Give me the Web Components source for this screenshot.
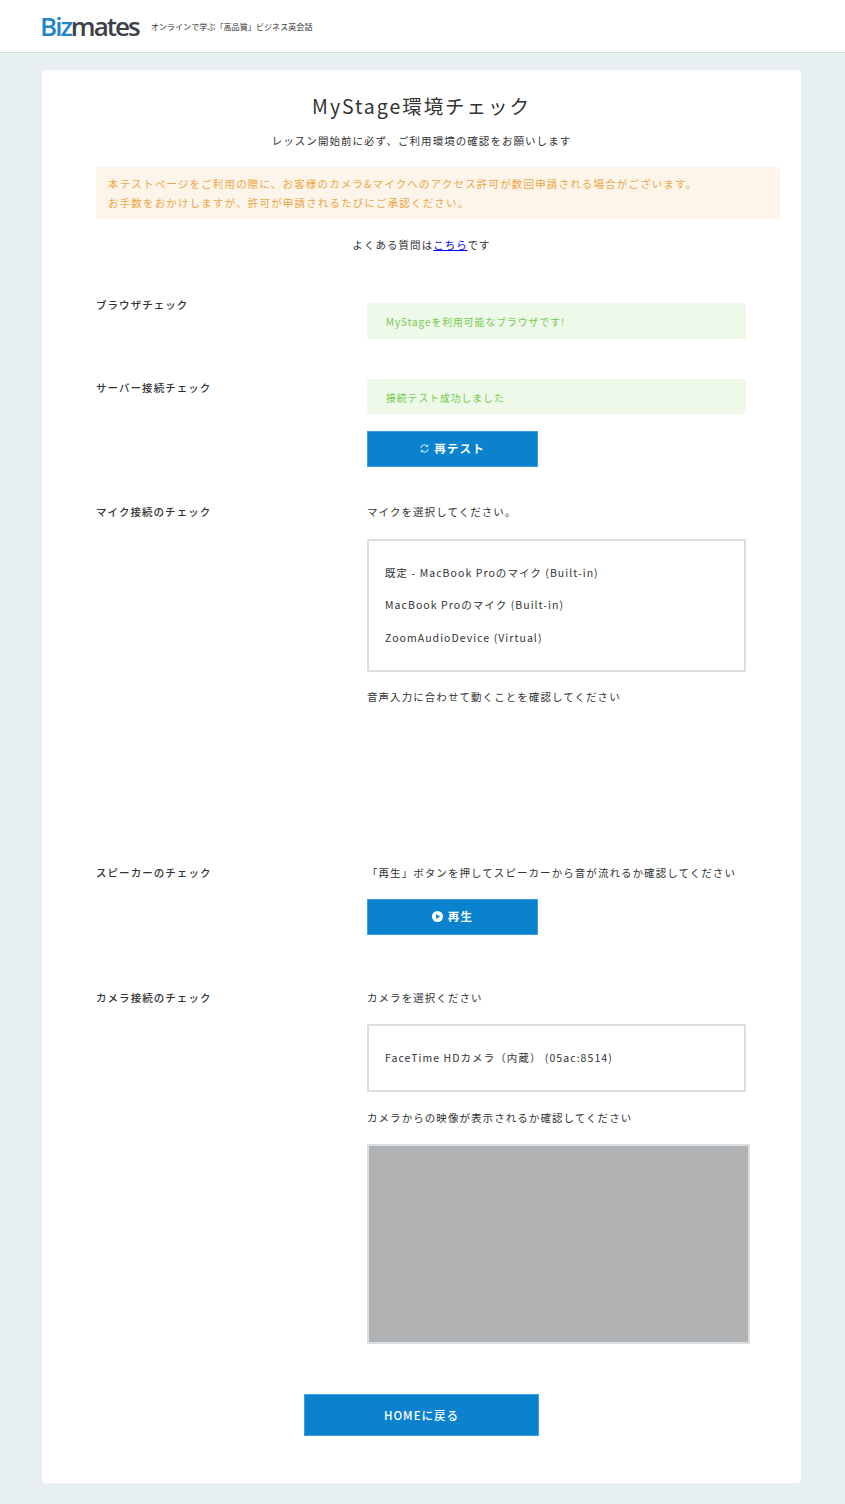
<!DOCTYPE html>
<html lang="ja">
<head>
<meta charset="utf-8">
<title>MyStage環境チェック</title>
<style>
  html, body { margin: 0; padding: 0; background: #e8eff1; }
  body {
    font-family: "Noto Sans CJK JP", "Noto Sans", sans-serif;
    color: #333;
    font-size: 10.5px;
  }
  .line { display: block; height: 16px; line-height: 16px; letter-spacing: 1.06px; white-space: nowrap; }
</style>
</head>
<body>

<site-header tagline="オンラインで学ぶ「高品質」ビジネス英会話"></site-header>

<check-card>
  <page-intro heading="MyStage環境チェック" lead="レッスン開始前に必ず、ご利用環境の確認をお願いします">
    本テストページをご利用の際に、お客様のカメラ&amp;マイクへのアクセス許可が数回申請される場合がございます。<br>
    お手数をおかけしますが、許可が申請されるたびにご承認ください。
    <span slot="faq">よくある質問は<a href="#faq">こちら</a>です</span>
  </page-intro>

  <check-row label="ブラウザチェック" style="--row-gap:44px;--body-top:6px">
    <status-box>MyStageを利用可能なブラウザです!</status-box>
  </check-row>

  <check-row label="サーバー接続チェック" style="--row-gap:40px;--label-top:1px">
    <status-box>接続テスト成功しました</status-box>
    <action-button icon="sync" style="--top:16.5px">再テスト</action-button>
  </check-row>

  <check-row label="マイク接続のチェック" style="--row-gap:37px">
    <span class="line">マイクを選択してください。</span>
    <device-list style="--top:19px;--pad:24px">
      <span>既定 - MacBook Proのマイク (Built-in)</span>
      <span>MacBook Proのマイク (Built-in)</span>
      <span>ZoomAudioDevice (Virtual)</span>
    </device-list>
    <span class="line" style="margin-top:17px">音声入力に合わせて動くことを確認してください</span>
  </check-row>

  <check-row label="スピーカーのチェック" style="--row-gap:160px">
    <span class="line">「再生」ボタンを押してスピーカーから音が流れるか確認してください</span>
    <action-button icon="play" style="--top:18px">再生</action-button>
  </check-row>

  <check-row label="カメラ接続のチェック" style="--row-gap:55px">
    <span class="line">カメラを選択ください</span>
    <device-list style="--top:18px;--pad:24px">
      <span>FaceTime HDカメラ（内蔵） (05ac:8514)</span>
    </device-list>
    <span class="line" style="margin-top:18px">カメラからの映像が表示されるか確認してください</span>
    <video-preview></video-preview>
  </check-row>

  <home-button>HOMEに戻る</home-button>
</check-card>

<script>
class SiteHeader extends HTMLElement {
  constructor() {
    super();
    this.attachShadow({mode: 'open'});
  }

  connectedCallback() {
    this.shadowRoot.innerHTML = `
      <style>
        :host {
          display: flex;
          align-items: center;
          height: 52px;
          padding-left: 40px;
          background: #fff;
          border-bottom: 1px solid #d3d9db;
        }
        .logo {
          font-family: "Open Sans", sans-serif;
          font-weight: 600;
          font-size: 26px;
          letter-spacing: -2px;
          line-height: 30px;
          color: #3c4146;
        }
        .logo b { font-weight: 600; color: #2186c9; }
        .tagline {
          margin-left: 12px;
          font-size: 8.1px;
          color: #333;
          white-space: nowrap;
        }
      </style>
      <span class="logo"><b>Biz</b>mates</span>
      <span class="tagline">${this.getAttribute('tagline')}</span>
    `;
  }
}

class CheckCard extends HTMLElement {
  constructor() {
    super();
    this.attachShadow({mode: 'open'}).innerHTML = `
      <style>
        :host {
          display: block;
          box-sizing: border-box;
          width: 759px;
          margin: 17px 0 21px 42px;
          padding: 21px 21px 47px 54px;
          background: #fff;
          border-radius: 3px;
        }
      </style>
      <slot></slot>
    `;
  }
}

class PageIntro extends HTMLElement {
  constructor() {
    super();
    this.attachShadow({mode: 'open'});
  }

  connectedCallback() {
    this.shadowRoot.innerHTML = `
      <style>
        :host { display: block; }
        h1 {
          margin: 0 0 0 -54px;
          width: 759px;
          font-size: 19.5px;
          font-weight: 400;
          line-height: 30px;
          letter-spacing: 1.95px;
          text-align: center;
          color: #333;
        }
        .lead, .faq {
          margin-left: -54px;
          width: 759px;
          height: 16px;
          line-height: 16px;
          font-size: 10.5px;
          text-align: center;
          letter-spacing: 1.05px;
        }
        .lead { margin-top: 12px; }
        .faq { margin-top: 18px; }
        .notice {
          margin-top: 18px;
          padding: 7px 12px;
          background: #fdf4ea;
          border-radius: 3px;
          color: #e9a745;
          font-size: 10.5px;
          line-height: 19px;
          letter-spacing: 1.17px;
          white-space: nowrap;
        }
        ::slotted(span) { color: #333; }
      </style>
      <h1>${this.getAttribute('heading')}</h1>
      <div class="lead">${this.getAttribute('lead')}</div>
      <div class="notice"><slot></slot></div>
      <div class="faq"><slot name="faq"></slot></div>
    `;
  }
}

class CheckRow extends HTMLElement {
  constructor() {
    super();
    this.attachShadow({mode: 'open'});
  }

  connectedCallback() {
    this.shadowRoot.innerHTML = `
      <style>
        :host {
          display: grid;
          grid-template-columns: 271px 379px;
          margin-top: var(--row-gap, 40px);
        }
        .label {
          margin-top: var(--label-top, 0);
          font-size: 10.5px;
          font-weight: 500;
          line-height: 16px;
          letter-spacing: 1.05px;
          white-space: nowrap;
        }
        .body { padding-top: var(--body-top, 0); }
      </style>
      <div class="label">${this.getAttribute('label')}</div>
      <div class="body"><slot></slot></div>
    `;
  }
}

class StatusBox extends HTMLElement {
  constructor() {
    super();
    this.attachShadow({mode: 'open'}).innerHTML = `
      <style>
        :host {
          display: block;
          box-sizing: border-box;
          height: 35.5px;
          padding: 11px 19px 0;
          background: #eef9e9;
          border-radius: 3px;
          color: #73cb50;
          font-size: 9.8px;
          line-height: 16px;
          letter-spacing: 1px;
        }
      </style>
      <slot></slot>
    `;
  }
}

const ICONS = {
  sync: `<svg width="9" height="9" viewBox="0 0 10 10" fill="none" stroke="#fff" stroke-width="1">
      <path d="M1 4.4A4 4 0 0 1 8 2.3"/><path d="M9 5.6A4 4 0 0 1 2 7.7"/>
      <path d="M8.6 .7V2.9H6.4" stroke-width=".9"/><path d="M1.4 9.3V7.1H3.6" stroke-width=".9"/>
    </svg>`,
  play: `<svg width="11" height="11" viewBox="0 0 11 11">
      <circle cx="5.5" cy="5.5" r="5.5" fill="#fff"/>
      <path d="M4.1 3v5l4-2.5z" fill="#0a82cd"/>
    </svg>`
};

class ActionButton extends HTMLElement {
  constructor() {
    super();
    this.attachShadow({mode: 'open'});
  }

  connectedCallback() {
    this.shadowRoot.innerHTML = `
      <style>
        :host {
          display: flex;
          box-sizing: border-box;
          align-items: center;
          justify-content: center;
          gap: 5px;
          width: 171px;
          height: 36px;
          padding-bottom: 2px;
          margin-top: var(--top, 0);
          background: #0a82cd;
          border: 1px solid #3f9fe8;
          color: #fff;
          font-size: 11.5px;
          font-weight: 700;
          letter-spacing: 1.15px;
        }
        svg { display: block; margin-top: 2px; }
      </style>
      ${ICONS[this.getAttribute('icon')] || ''}
      <slot></slot>
    `;
  }
}

class DeviceList extends HTMLElement {
  constructor() {
    super();
    this.attachShadow({mode: 'open'}).innerHTML = `
      <style>
        :host {
          display: flex;
          flex-direction: column;
          gap: 16.5px;
          box-sizing: border-box;
          margin-top: var(--top, 0);
          padding: var(--pad, 17px) 16px;
          background: #fff;
          border: 2px solid #dcdfe2;
          border-radius: 1px;
          font-size: 10.5px;
          line-height: 16px;
          letter-spacing: 1.06px;
          white-space: nowrap;
        }
      </style>
      <slot></slot>
    `;
  }
}

class VideoPreview extends HTMLElement {
  constructor() {
    super();
    this.attachShadow({mode: 'open'}).innerHTML = `
      <style>
        :host {
          display: block;
          box-sizing: border-box;
          width: 383px;
          height: 200px;
          margin-top: 18px;
          background: #b1b2b4;
          border: 2px solid #dcdfe2;
        }
      </style>
    `;
  }
}

class HomeButton extends HTMLElement {
  constructor() {
    super();
    this.attachShadow({mode: 'open'}).innerHTML = `
      <style>
        :host {
          display: flex;
          box-sizing: border-box;
          align-items: center;
          justify-content: center;
          width: 235px;
          height: 42px;
          margin: 50px 0 0 208px;
          background: #0a82cd;
          border: 1px solid #3f9fe8;
          color: #fff;
          font-size: 11.5px;
          font-weight: 500;
          letter-spacing: 1px;
        }
      </style>
      <slot></slot>
    `;
  }
}

customElements.define('site-header', SiteHeader);
customElements.define('check-card', CheckCard);
customElements.define('page-intro', PageIntro);
customElements.define('check-row', CheckRow);
customElements.define('status-box', StatusBox);
customElements.define('action-button', ActionButton);
customElements.define('device-list', DeviceList);
customElements.define('video-preview', VideoPreview);
customElements.define('home-button', HomeButton);
</script>
</body>
</html>
